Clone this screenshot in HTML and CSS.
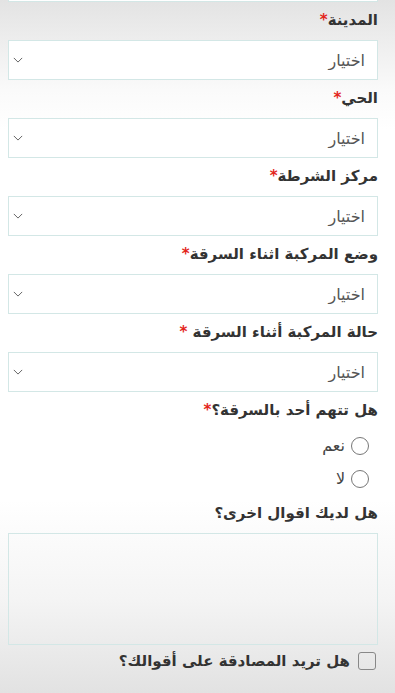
FILE: index.html
```html
<!DOCTYPE html>
<html lang="ar" dir="rtl">
<head>
  <meta charset="UTF-8">
  <title>بلاغ سرقة مركبة</title>
  <meta name="viewport" content="width=device-width, initial-scale=1" />
  <link rel="stylesheet" href="styles.css">
</head>
<body>

  <form class="report">

    <div class="select-wrap tail">
      <select class="select"><option>اختيار</option></select>
    </div>

    <label class="label">المدينة<span class="req">*</span></label>
    <div class="select-wrap">
      <select class="select"><option>اختيار</option></select>
      <svg class="chevron" viewBox="0 0 12 7"><path d="M1 1l5 5 5-5" /></svg>
    </div>

    <label class="label">الحي<span class="req">*</span></label>
    <div class="select-wrap">
      <select class="select"><option>اختيار</option></select>
      <svg class="chevron" viewBox="0 0 12 7"><path d="M1 1l5 5 5-5" /></svg>
    </div>

    <label class="label">مركز الشرطة<span class="req">*</span></label>
    <div class="select-wrap">
      <select class="select"><option>اختيار</option></select>
      <svg class="chevron" viewBox="0 0 12 7"><path d="M1 1l5 5 5-5" /></svg>
    </div>

    <label class="label">وضع المركبة اثناء السرقة<span class="req">*</span></label>
    <div class="select-wrap">
      <select class="select"><option>اختيار</option></select>
      <svg class="chevron" viewBox="0 0 12 7"><path d="M1 1l5 5 5-5" /></svg>
    </div>

    <label class="label">حالة المركبة أثناء السرقة <span class="req">*</span></label>
    <div class="select-wrap">
      <select class="select"><option>اختيار</option></select>
      <svg class="chevron" viewBox="0 0 12 7"><path d="M1 1l5 5 5-5" /></svg>
    </div>

    <label class="label">هل تتهم أحد بالسرقة؟<span class="req">*</span></label>
    <div class="radios">
      <label class="radio"><input type="radio" name="accuse"> نعم</label>
      <label class="radio"><input type="radio" name="accuse"> لا</label>
    </div>

    <label class="label">هل لديك اقوال اخرى؟</label>
    <textarea class="textarea"></textarea>

    <label class="check"><input type="checkbox"> هل تريد المصادقة على أقوالك؟</label>

  </form>

</body>
</html>
```

FILE: styles.css
```css
html {
  min-height: 100%;
  background: linear-gradient(to bottom, #e3e3e3 0, #fafafa 90px, #ffffff 130px, #ffffff 500px, #f4f4f4 600px, #e2e2e2 100%);
}
body {
  margin: 0;
  padding: 0;
  font-family: "DejaVu Sans", "Noto Sans", sans-serif;
  color: #333;
}
*, *:before, *:after {
  box-sizing: border-box;
}

.report {
  display: flex;
  flex-direction: column;
  padding: 0 17px 0 8px;
}

.label {
  display: block;
  font-size: 15px;
  font-weight: bold;
  line-height: 24px;
  margin: 6px 0 8px;
  color: #333;
}
.req {
  color: #e3261c;
}

.select-wrap {
  position: relative;
}
.select-wrap.tail {
  margin-top: -38px;
}
.select {
  display: block;
  width: 100%;
  height: 40px;
  -webkit-appearance: none;
  appearance: none;
  border: 1px solid #d3e7e6;
  border-radius: 0;
  background-color: #fff;
  padding: 0 12px 0 30px;
  font-family: inherit;
  font-size: 16px;
  color: #555;
  outline: none;
}
.chevron {
  position: absolute;
  left: 5px;
  top: 17px;
  width: 10px;
  height: 6px;
  pointer-events: none;
  fill: none;
  stroke: #666;
  stroke-width: 1.2;
}

.radios {
  display: flex;
  flex-direction: column;
  margin-top: -1px;
}
.radio {
  display: flex;
  align-items: center;
  height: 33px;
  padding-right: 9px;
  font-size: 16px;
  color: #444;
}
.radio input,
.check input {
  -webkit-appearance: none;
  appearance: none;
  margin: 0 0 0 6px;
  width: 18px;
  height: 18px;
  border: 1px solid #777;
  border-radius: 50%;
  background: transparent;
}

.textarea {
  display: block;
  width: 100%;
  height: 112px;
  border: 1px solid #d3e7e6;
  background: transparent;
  resize: none;
  outline: none;
  margin: 0;
}

.check {
  display: flex;
  align-items: center;
  margin-top: 7px;
  padding-right: 2px;
  font-size: 15px;
  font-weight: bold;
  color: #333;
}
.check input {
  margin-left: 8px;
  width: 18px;
  height: 18px;
  border-radius: 3px;
  border-color: #888;
}
```
